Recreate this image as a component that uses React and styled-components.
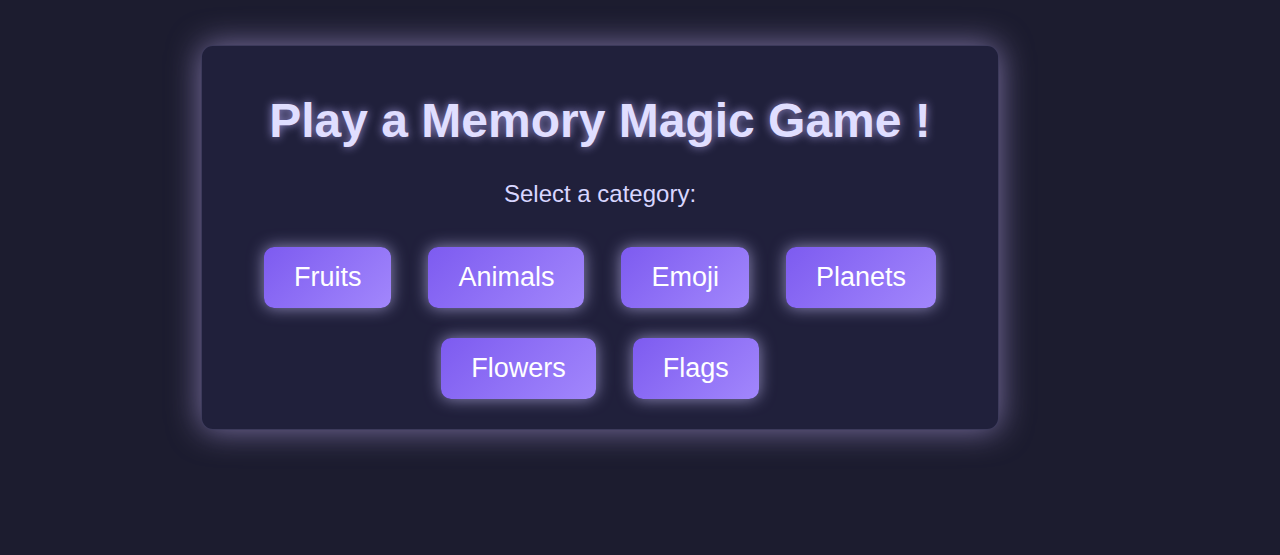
import React from "react";
import styled, { createGlobalStyle } from "styled-components";

const categories = [
  "Fruits",
  "Animals",
  "Emoji",
  "Planets",
  "Flowers",
  "Flags",
];

export default function App() {
  return (
    <>
      <GlobalStyle />
      <Page>
        <Card>
          <Title>Play a Memory Magic Game !</Title>
          <Subtitle>Select a category:</Subtitle>
          <Categories>
            {categories.map((name) => (
              <CategoryButton key={name}>{name}</CategoryButton>
            ))}
          </Categories>
        </Card>
      </Page>
    </>
  );
}

const GlobalStyle = createGlobalStyle`
  html, body {
    margin: 0;
    padding: 0;
    background: #1c1c2f;
    font-family: "Liberation Sans", Arial, sans-serif;
  }
`;

const Page = styled.div`
  min-height: 555px;
  box-sizing: border-box;
  padding: 45px 0 0 201px;
`;

const Card = styled.div`
  width: 798px;
  box-sizing: border-box;
  padding: 47px 32px 30px;
  background: #20203b;
  border-radius: 12px;
  border: 1px solid rgba(190, 175, 240, 0.18);
  box-shadow: 0 0 32px rgba(185, 168, 235, 0.62);
  display: flex;
  flex-direction: column;
  align-items: center;
`;

const Title = styled.h1`
  margin: 0;
  font-size: 48px;
  font-weight: 700;
  color: #e0deff;
  text-shadow: 0 0 10px rgba(190, 180, 255, 0.75);
`;

const Subtitle = styled.p`
  margin: 32px 0 0;
  font-size: 24px;
  color: #d8d6ff;
`;

const Categories = styled.div`
  margin-top: 39px;
  width: 734px;
  display: flex;
  flex-wrap: wrap;
  justify-content: center;
  gap: 30px 37px;
`;

const CategoryButton = styled.button`
  font-family: "Liberation Sans", Arial, sans-serif;
  font-size: 27px;
  line-height: 31px;
  padding: 15px 30px;
  border: none;
  border-radius: 10px;
  color: #ffffff;
  background: linear-gradient(135deg, #7d5bf0, #a287fc);
  box-shadow: 0 0 16px rgba(205, 195, 255, 0.65);
  cursor: pointer;
`;
